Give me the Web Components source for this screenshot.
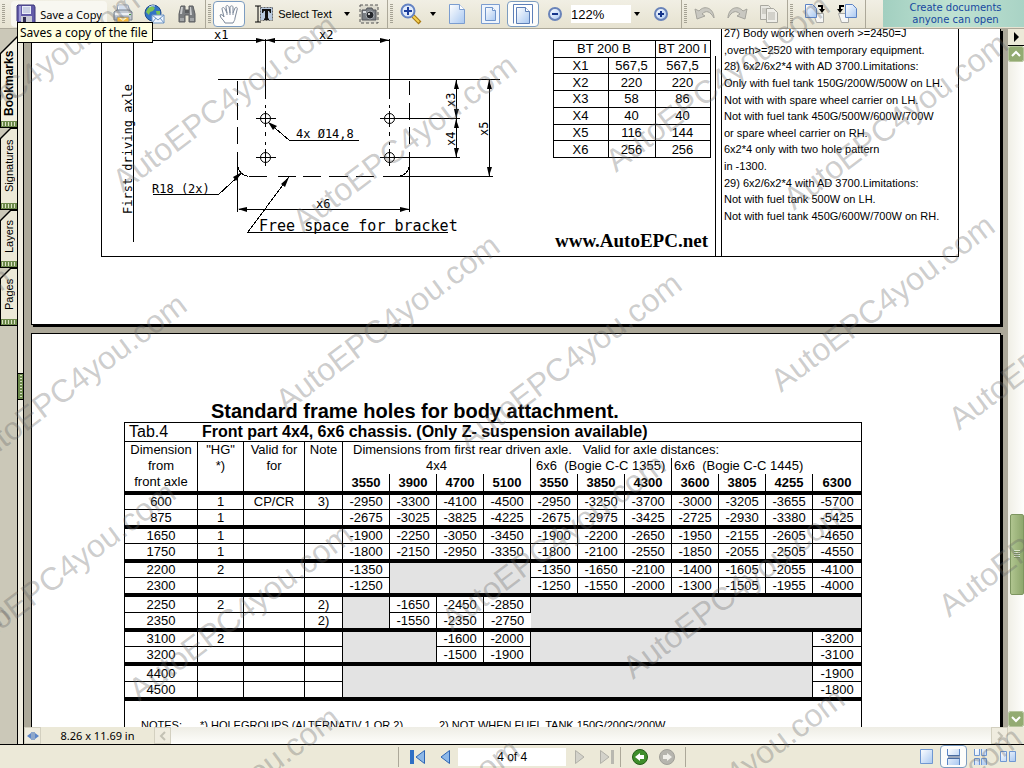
<!DOCTYPE html>
<html lang="en">
<head>
<meta charset="utf-8">
<title>Document viewer</title>
<style>
  body {
    margin: 0;
    font-family: "Liberation Sans", Arial, sans-serif;
    font-size: 11px;
    color: #000;
  }
</style>
</head>
<body>
<viewer-app></viewer-app>

<script>
// Small helper, every component fills its open shadow root the same way
function fill(host, css, html) {
  const shadow = host.attachShadow({ mode: 'open' });
  shadow.innerHTML = `<style>*{box-sizing:border-box}${css}</style>${html}`;
  return shadow;
}

// All of the icons, each one is [width, height, svg content]
const ICONS = {
  save: [20, 20, `<path d="M2 1h16l1 2v16H3l-2-2V2z" fill="#625ba8" stroke="#3c3778"/><path d="M3 2h2v15H3z" fill="#9c98d6"/><path d="M6 2h9v8H6z" fill="#e9edf8"/><path d="M7 4h7M7 6h7M7 8h7" stroke="#aab3cf"/><path d="M5 12h11v7H5z" fill="#c9cbd6"/><path d="M7 13h3v5H7z" fill="#2f2c52"/>`],
  print: [22, 20, `<path d="M6 1h10l2 7H5z" fill="#fff" stroke="#9aa6b8"/><path d="M7 3h8M7 5h9" stroke="#a8bfe0"/><path d="M2 8l3-2h12l3 2v8H2z" fill="#c3c9d1" stroke="#7b838f"/><path d="M3 9h16v2H3z" fill="#eef0f3"/><path d="M5 13h12v5H5z" fill="#f6b637" stroke="#8b93a0"/><path d="M7 14l4 3 4-3z" fill="#fff3c2"/><path d="M17 10h2v1h-2z" fill="#3b9b3b"/>`],
  mail: [22, 20, `<circle cx="9" cy="9" r="8" fill="#3273c6" stroke="#1d4b8d"/><path d="M4 4l4-2 3 2-2 3-3 1-1 3-3-3zM12 7l4 0v4l-3 1z" fill="#7cc355"/><path d="M5 3q3-2 6-1" stroke="#cfe6ff" fill="none"/><path d="M8 11h12v8H8z" fill="#eef5fd" stroke="#6d94c4"/><path d="M8 11l6 5 6-5M8 19l4-5M20 19l-4-5" fill="none" stroke="#6d94c4"/>`],
  find: [20, 20, `<path d="M4 2h4v4h4V2h4l2 8v8h-6v-7H8v7H2v-8z" fill="#7a7d80" stroke="#5c5e60"/><path d="M4 3h2l-1 7H3zM13 3h1l1 8h-2z" fill="#c9cbcc"/><path d="M3 14h4v3H3zM13 14h4v3h-4z" fill="#a3a6a8"/><path d="M8 6h4v3H8z" fill="#5b5d5f"/>`],
  hand: [22, 20, `<path d="M7 19c-1-3-5-5-5-8 1-1 3 0 4 2L4 5c0-2 2-2 3 0l2 4-1-6c0-2 2-2 3 0l1 6V3c1-2 3-1 3 0v6l2-5c1-1 3-1 2 2l-2 8c0 2-1 3-2 5z" fill="#fff" stroke="#7b8798"/><path d="M9 9v2M12 9v2M15 9v2" stroke="#7b8798"/>`],
  text: [20, 20, `<path d="M1 2h6M1 18h6M4 2v16" stroke="#000" fill="none"/><path d="M6 3h13v13H6z" fill="#b7c9df"/><path d="M6.500 3.500h12v13h-12z" fill="none" stroke="#666" stroke-dasharray="2 1"/><path d="M8 5h9v4h-1l-1-2h-1v7l1 1v1h-5v-1l1-1V7h-1L9 9H8z" fill="#111"/>`],
  camera: [20, 20, `<rect x="1" y="1" width="18" height="18" fill="#dcdace" stroke="#555" stroke-dasharray="3 2"/><path d="M3 6h4l1-2h5l1 2h3v10H3z" fill="#7a7f84" stroke="#54575b"/><path d="M4 7h3v2H4z" fill="#d9dcdf"/><circle cx="11" cy="11" r="4" fill="#24272b" stroke="#a3a8ad"/><circle cx="10" cy="10" r="1" fill="#fff"/>`],
  zoom: [22, 22, `<path d="M13 13l7 7" stroke="#a87a14" stroke-width="4"/><path d="M13 13l6 6" stroke="#f5d052" stroke-width="2"/><circle cx="8" cy="8" r="6.500" fill="#e1ebfb" stroke="#6483c3" stroke-width="2"/><path d="M8 4v8M4 8h8" stroke="#1d3f9c" stroke-width="2"/>`],
  page: [18, 20, `<path d="M1.500.500h10l5 5v14h-15z" fill="url(#pg)" stroke="#7b9dd0"/><path d="M11.500.500v5h5" fill="#fff" stroke="#7b9dd0"/>`],
  fit: [20, 20, `<path d="M.500.500h18v19H.500z" fill="#eef4fc" stroke="#7b9dd0"/><path d="M4.500 3.500h7l3 3v10h-10z" fill="url(#pg)" stroke="#6f94cb"/><path d="M11.500 3.500v3h3" fill="#fff" stroke="#6f94cb"/>`],
  width: [20, 20, `<path d="M.500 19.500V.500h19v19" fill="#fff" stroke="#5d7fb8"/><path d="M3.500 19.500v-16h9l4 4v12z" fill="url(#pg)" stroke="#5d7fb8"/><path d="M12.500 3.500v4h4" fill="#fff" stroke="#5d7fb8"/>`],
  minus: [16, 16, `<circle cx="8" cy="8" r="6" fill="url(#pg)" stroke="#6983b9" stroke-width="2"/><path d="M5 8h6" stroke="#14348a" stroke-width="2"/>`],
  plus: [16, 16, `<circle cx="8" cy="8" r="6" fill="url(#pg)" stroke="#6983b9" stroke-width="2"/><path d="M5 8h6M8 5v6" stroke="#14348a" stroke-width="2"/>`],
  undo: [22, 20, `<path d="M1 5l2 10 8-3-3-2c4-4 8-3 12 4 0-9-9-14-15-7z" fill="#c9c8c1" stroke="#a5a49c"/>`],
  redo: [22, 20, `<path d="M21 5l-2 10-8-3 3-2C10 6 6 7 2 14 2 5 11 0 17 7z" fill="#c9c8c1" stroke="#a5a49c"/>`],
  copy: [20, 20, `<path d="M1.500 1.500h8l2 2v12h-10z" fill="#e9e8e2" stroke="#a9a8a0"/><path d="M3 5h6M3 7h6M3 9h4" stroke="#b5b4ac"/><path d="M7.500 4.500h7l4 4v10h-11z" fill="#efeee8" stroke="#a9a8a0"/><path d="M9 9h7M9 11h7M9 13h7M9 15h7" stroke="#b5b4ac"/>`],
  turnright: [22, 20, `<path d="M9.500 9.500h10v9h-7z" fill="#f6f6f4" stroke="#a8a8a5"/><path d="M1.500.500h7l4 4v9h-11z" fill="url(#pg)" stroke="#5c83c4"/><path d="M14 2h4v3" fill="none" stroke="#000" stroke-width="2"/><path d="M15 5h6l-3 4z"/>`],
  turnleft: [22, 20, `<path d="M2.500 9.500h10v9h-7z" fill="#f6f6f4" stroke="#a8a8a5"/><path d="M9.500.500h7l4 4v9h-11z" fill="url(#pg)" stroke="#5c83c4"/><path d="M8 2H4v3" fill="none" stroke="#000" stroke-width="2"/><path d="M1 5h6L4 9z"/>`],
  drop: [6, 4, `<path d="M0 0h6L3 4z"/>`],
  first: [18, 16, `<path d="M1 1h4v14H1z" fill="#2f6fc4"/><path d="M15.500 1.500v13L7 8z" fill="#8db8e8" stroke="#2c64b4"/>`],
  prev: [12, 16, `<path d="M10.500 1.500v13L2 8z" fill="#8db8e8" stroke="#2c64b4"/>`],
  next: [12, 16, `<path d="M1.500 1.500v13L10 8z" fill="#d3d2ca" stroke="#b1b0a8"/>`],
  last: [18, 16, `<path d="M2.500 1.500v13L11 8z" fill="#d3d2ca" stroke="#b1b0a8"/><path d="M13 1h3v14h-3z" fill="#b9b8b0"/>`],
  back: [16, 16, `<circle cx="8" cy="8" r="7.500" fill="#3f8e2b" stroke="#235b17"/><path d="M3 8l5-4v2h4v4H8v2z" fill="#fff"/>`],
  forward: [16, 16, `<circle cx="8" cy="8" r="7.500" fill="#b6b5ae" stroke="#a09f98"/><path d="M13 8L8 4v2H4v4h4v2z" fill="#f1f0ea"/>`],
  single: [14, 16, `<path d="M.500.500h12v14H.500z" fill="url(#pg)" stroke="#6f97d2"/>`],
  continuous: [14, 16, `<path d="M.500 0v6.500h12V0M.500 16V9.500h12V16" fill="url(#pg)" stroke="#5b86c6"/><path d="M1 7h12M1 9h12" stroke="#36507d"/>`],
  facing: [14, 16, `<path d="M.500 0v6.500h5V0M7.500 0v6.500h5V0M.500 16V9.500h5V16M7.500 16V9.500h5V16" fill="url(#pg)" stroke="#6f97d2"/>`],
  double: [16, 16, `<path d="M.500 2.500h6v10h-6zM9.500 2.500h6v10h-6z" fill="url(#pg)" stroke="#6f97d2"/>`],
  split: [12, 10, `<path d="M5 1v8M7 1v8" stroke="#2f62b5"/><path d="M4 2v6L0 5zM8 2v6l4-3z" fill="#5d86c8"/>`],
  menu: [8, 10, `<path d="M2 0l5 5-5 5z"/>`],
  up: [10, 8, `<path d="M1 6l4-4 4 4" fill="none" stroke="#fff" stroke-width="2"/>`],
  down: [10, 8, `<path d="M1 2l4 4 4-4" fill="none" stroke="#fff" stroke-width="2"/>`],
  left: [8, 10, `<path d="M6 1L2 5l4 4" fill="none" stroke="#c3c1b4" stroke-width="2"/>`],
  right: [8, 10, `<path d="M2 1l4 4-4 4" fill="none" stroke="#c3c1b4" stroke-width="2"/>`]
};

class ViewIcon extends HTMLElement {
  constructor () {
    super();
    const [w, h, shape] = ICONS[this.getAttribute('name')];
    fill(this, `:host{display:inline-flex;flex:none} svg{display:block}`,
      `<svg width="${w}" height="${h}" viewBox="0 0 ${w} ${h}" aria-hidden="true">
        <linearGradient id="pg" x2="1" y2="1"><stop stop-color="#fff"/><stop offset="1" stop-color="#a9c8f1"/></linearGradient>
        ${shape}
      </svg>`);
  }
}

// Toolbar button: icon attribute, optional text in the slot
class ToolButton extends HTMLElement {
  constructor () {
    super();
    fill(this, `
      :host { display: flex; width: 32px; height: 26px; flex: none; }
      :host([size="small"]) { width: 12px; }
      :host([size="medium"]) { width: 27px; }
      :host([size="page"]) { width: 36px; }
      :host([size="wide"]) { width: 96px; }
      button {
        display: flex; align-items: center; justify-content: center; gap: 4px;
        width: 100%; height: 100%; padding: 0; margin: 0;
        border: 1px solid transparent; border-radius: 4px; background: none;
        font: inherit; color: inherit; white-space: nowrap;
      }
      :host([raised]) button { background: #f8f7f1; }
      :host([pressed]) button { background: #fdfdfb; border-color: #7c9cc0; }
    `, `<button aria-label="${this.getAttribute('label')}"><view-icon name="${this.getAttribute('icon')}"></view-icon><slot></slot></button>`);
  }
}

// A run of tools with the dotted grip in front and a line behind
class ToolGroup extends HTMLElement {
  constructor () {
    super();
    fill(this, `
      :host { display: flex; align-items: center; flex: none; height: 28px; border-right: 1px solid #aca899; padding-right: 2px; }
      i { width: 3px; height: 20px; margin: 0 2px; background: repeating-linear-gradient(#a5a294 0 1px, transparent 1px 2px); }
    `, `<i></i><slot></slot>`);
  }
}

class ViewToolbar extends HTMLElement {
  constructor () {
    super();
    fill(this, `
      :host { display: flex; align-items: center; height: 29px; flex: none; overflow: hidden; background: linear-gradient(#f1efe4, #e6e2d0); border-bottom: 1px solid #aca899; }
      .save { font-family: "Noto Sans", sans-serif; }
      .gap { width: 4px; }
      label { display: flex; }
      input { width: 60px; height: 18px; border: 0; padding: 0; background: #fff; font: 13px "Liberation Sans", Arial, sans-serif; }
      a {
        margin-left: auto; width: 141px; height: 27px; padding: 2px 0 0 4px; align-self: flex-start;
        background: linear-gradient(90deg, #a2cfc0, #bfe2d2 50%, #a9d3c5);
        color: #1648a0; text-align: center; text-decoration: none;
        font: 10px/12px "DejaVu Sans", sans-serif;
      }
    `, `
      <tool-group>
        <span class="gap"></span>
        <tool-button class="save" icon="save" label="Save a Copy" size="wide" raised>Save a Copy</tool-button>
        <tool-button icon="print" label="Print"></tool-button>
        <tool-button icon="mail" label="Email"></tool-button>
        <tool-button icon="find" label="Search"></tool-button>
      </tool-group>
      <tool-group>
        <tool-button icon="hand" label="Hand tool" pressed></tool-button>
        <tool-button icon="text" label="Select Text" size="wide">Select Text</tool-button>
        <tool-button icon="drop" label="Selection tools" size="small"></tool-button>
        <tool-button icon="camera" label="Snapshot"></tool-button>
      </tool-group>
      <tool-group>
        <tool-button icon="zoom" label="Zoom in"></tool-button>
        <tool-button icon="drop" label="Zoom tools" size="small"></tool-button>
        <tool-button icon="page" label="Actual size" size="page"></tool-button>
        <tool-button icon="fit" label="Fit page"></tool-button>
        <tool-button icon="width" label="Fit width" pressed></tool-button>
        <tool-button icon="minus" label="Zoom out"></tool-button>
        <label><input value="122%" aria-label="Zoom level"></label>
        <tool-button icon="drop" label="Zoom levels" size="small"></tool-button>
        <tool-button icon="plus" label="Zoom in more" size="page"></tool-button>
      </tool-group>
      <tool-group>
        <tool-button icon="undo" label="Undo"></tool-button>
        <tool-button icon="redo" label="Redo"></tool-button>
        <tool-button icon="copy" label="Copy"></tool-button>
      </tool-group>
      <tool-group>
        <span class="gap"></span>
        <tool-button icon="turnright" label="Rotate clockwise"></tool-button>
        <tool-button icon="turnleft" label="Rotate counterclockwise"></tool-button>
      </tool-group>
      <a href="#">Create documents<br>anyone can open</a>
    `);
  }
}

// Vertical tab of the navigation pane
class NavTab extends HTMLElement {
  constructor () {
    super();
    fill(this, `
      :host { display: block; width: 18px; height: 58px; background: #000; padding: 1px; flex: none; --cut: polygon(0 10px, 10px 0, 100% 0, 100% 100%, 0 100%); clip-path: var(--cut); }
      :host([selected]) { height: 99px; font-weight: bold; --cut: polygon(0 24px, 18px 6px, 100% 6px, 100% 100%, 0 100%); }
      :host([tall]) { height: 82px; }
      button { display: flex; flex-direction: column; width: 100%; height: 100%; padding: 0; border: 0; background: #f3f0e2; clip-path: var(--cut); font: inherit; font-size: 11px; color: inherit; }
      :host([selected]) button { font-size: 12px; }
      :host(:not([selected])) button { background: #ece9d8; }
      span { flex: 1; width: 100%; display: flex; justify-content: center; align-items: center; writing-mode: vertical-rl; transform: rotate(180deg); }
      :host([selected]) span { padding-bottom: 16px; }
      i { height: 6px; width: 100%; background: radial-gradient(#d9e2c4 1px, transparent 1px) 0 0 / 3px 6px, #6d8a4c; }
    `, `<button><span><slot></slot></span><i></i></button>`);
  }
}

class NavPane extends HTMLElement {
  constructor () {
    super();
    fill(this, `
      :host { display: flex; flex: none; width: 24px; background: #cbc8b8; }
      nav { width: 18px; border-right: 1px solid #000; }
      nav > * { width: 18px; }
      div { flex: 1; display: flex; flex-direction: column; justify-content: center; background: #efecdf; border-right: 1px solid #000; }
      i { height: 27px; border: solid #000; border-width: 1px 0; background: radial-gradient(#d9e2c4 1px, transparent 1px) 0 0 / 5px 3px, #6d8a4c; }
    `, `
      <nav>
        <nav-tab selected>Bookmarks</nav-tab>
        <nav-tab tall>Signatures</nav-tab>
        <nav-tab>Layers</nav-tab>
        <nav-tab>Pages</nav-tab>
      </nav>
      <div><i></i></div>
    `);
  }
}

// One sheet of paper with its hard black shadow
class DocPage extends HTMLElement {
  constructor () {
    super();
    fill(this, `
      :host { display: block; flex: none; background: #fff; border: 1px solid #000; box-shadow: 2px 2px 0 #000; }
      :host([cut]) { border-top: 0; }
    `, `<slot></slot>`);
  }
}

class HoleDrawing extends HTMLElement {
  constructor () {
    super();
    const hole = (x, y) => `<circle cx="${x}" cy="${y}" r="5"/><path d="M${x - 10} ${y}h20M${x} ${y - 8}v16"/>`;
    fill(this, `
      :host { display: block; flex: none; width: 446px; }
      svg { display: block; }
      .l { fill: none; stroke: #000; shape-rendering: crispEdges; }
      circle { shape-rendering: auto; }
      text { font: 12px "DejaVu Sans Mono", monospace; }
      .wide { font-size: 15px; }
    `, `
      <svg width="446" height="227" viewBox="102 29 446 227">
        <g class="l" transform="translate(.5 .5)">
          <path d="M133 29v212M134 40h255M265 38v60M265 104v3M265 131v4M265 141v3M265 148v3M389 38v60M389 104v3M389 131v4M389 141v3M389 148v3"/>
          <path d="M217 79h282M237 80v14M237 102v17M237 126v17M237 151v60M409 80v14M409 102v17M409 126v17M409 151v60"/>
          <path d="M248 176h18M277 176h18M302 176h18M328 176h19M355 176h18M382 176h110"/>
          <path d="M237 165q2 10 11 11M409 165q-2 10-11 11M238 209h171"/>
          <path d="M399 118h60M399 157h60M456 79v78M489 79v97"/>
          <path d="M152 194h66l23-21M268 122l21 18h69M288 177l-41 55h200"/>
          ${hole(265, 118)}${hole(265, 157)}${hole(389, 118)}${hole(389, 157)}
        </g>
        <path d="M265 40l-9-2v5zM266 40l9-2v5zM389 40l-9-2v5zM238 209l9-2v5zM409 209l-9-2v5z
          M456 80l-2 9h5zM456 118l-2-9h5zM456 119l-2 9h5zM456 157l-2-9h5zM489 80l-2 9h5zM489 176l-2-9h5z
          M242 172l-9 5 3 4zM268 122l5 8 4-4zM289 177l-8 7 4 3z"/>
        <text x="214" y="39">x1</text>
        <text x="319" y="39">x2</text>
        <text x="316" y="208">x6</text>
        <text x="152" y="193">R18 (2x)</text>
        <text x="296" y="138">4x Ø14,8</text>
        <text class="wide" x="259" y="231">Free space for bracket</text>
        <text transform="translate(132 214) rotate(-90)">First driving axle</text>
        <text transform="translate(455 107) rotate(-90)">x3</text>
        <text transform="translate(455 146) rotate(-90)">x4</text>
        <text transform="translate(488 136) rotate(-90)">x5</text>
      </svg>
    `);
  }
}

class SizeTable extends HTMLElement {
  constructor () {
    super();
    const rows = [['X1', '567,5', '567,5'], ['X2', 220, 220], ['X3', 58, 86], ['X4', 40, 40], ['X5', 116, 144], ['X6', 256, 256]];
    fill(this, `
      :host { display: block; }
      table { width: 158px; height: 118px; table-layout: fixed; border-collapse: collapse; font-size: 13px; line-height: 15px; }
      th, td { border: 1px solid #000; padding: 0; text-align: center; font-weight: normal; white-space: nowrap; }
    `, `
      <table>
        <colgroup><col style="width:55px"><col style="width:47px"><col></colgroup>
        <tr><th colspan="2">BT 200 B</th><th>BT 200 I</th></tr>
        ${rows.map(r => `<tr>${r.map(c => `<td>${c}</td>`).join('')}</tr>`).join('')}
      </table>
    `);
  }
}

class NoteList extends HTMLElement {
  constructor () {
    super();
    const lines = [
      '27) Body work when overh &gt;=2450=J', ',overh&gt;=2520 with temporary equipment.',
      '28) 6x2/6x2*4 with AD 3700.Limitations:', 'Only with fuel tank 150G/200W/500W on LH.',
      'Not with with spare wheel carrier on LH.', 'Not with fuel tank 450G/500W/600W/700W',
      'or spare wheel carrier on RH.', '6x2*4 only with two hole pattern', 'in -1300.',
      '29) 6x2/6x2*4 with AD 3700.Limitations:', 'Not with fuel tank 500W on LH.',
      'Not with fuel tank 450G/600W/700W on RH.'
    ];
    fill(this, `
      :host { display: grid; grid-auto-rows: 1fr; align-items: center; height: 199px; line-height: 14px; white-space: nowrap; }
    `, lines.map(l => `<span>${l}</span>`).join(''));
  }
}

class FrameTable extends HTMLElement {
  constructor () {
    super();
    // A string such as "#3x2" is a grey area of 3 columns by 2 rows
    const rows = [
      '600 1 CP/CR 3) -2950 -3300 -4100 -4500 -2950 -3250 -3700 -3000 -3205 -3655 -5700',
      '875 1 _ _ -2675 -3025 -3825 -4225 -2675 -2975 -3425 -2725 -2930 -3380 -5425',
      '1650 1 _ _ -1900 -2250 -3050 -3450 -1900 -2200 -2650 -1950 -2155 -2605 -4650',
      '1750 1 _ _ -1800 -2150 -2950 -3350 -1800 -2100 -2550 -1850 -2055 -2505 -4550',
      '2200 2 _ _ -1350 #3x2 -1350 -1650 -2100 -1400 -1605 -2055 -4100',
      '2300 _ _ _ -1250 -1250 -1550 -2000 -1300 -1505 -1955 -4000',
      '2250 2 _ 2) #1x2 -1650 -2450 -2850 #7x2',
      '2350 _ _ 2) -1550 -2350 -2750',
      '3100 2 _ _ #2x2 -1600 -2000 #6x2 -3200',
      '3200 _ _ _ -1500 -1900 -3100',
      '4400 _ _ _ #10x2 -1900',
      '4500 _ _ _ -1800'
    ];
    const cell = c => {
      if (c[0] === '#') {
        const [cols, span] = c.slice(1).split('x');
        return `<td class="grey" colspan="${cols}" rowspan="${span}"></td>`;
      }
      return `<td>${c === '_' ? '' : c}</td>`;
    };
    const axles = [3550, 3900, 4700, 5100, 3550, 3850, 4300, 3600, 3805, 4255, 6300];
    fill(this, `
      :host { display: block; }
      table { width: 736px; table-layout: fixed; border-collapse: separate; border-spacing: 0; font-size: 13px; line-height: 14px; }
      th, td { padding: 0; font-weight: normal; text-align: center; border: 0 solid #000; white-space: nowrap; overflow: hidden; }
      .title th { height: 19px; border-bottom-width: 1px; text-align: left; padding-left: 4px; font-size: 16px; line-height: 18px; }
      .title th + th { font-weight: bold; }
      .head th { height: 16px; line-height: 16px; }
      .head .side { vertical-align: top; border-width: 0 1px 4px 0; }
      .head .left { text-align: left; padding-left: 10px; }
      .head .bogie { text-align: left; padding-left: 5px; border-left-width: 0; border-right-width: 1px; overflow: visible; }
      .head .bogie.second { padding-left: 2px; border-right: 0; }
      .head .four { border-right-width: 1px; }
      .axle th { height: 21px; font-weight: bold; border-width: 0 1px 4px 0; }
      .axle th:last-child { border-right: 0; }
      tbody td { height: 15px; border-width: 0 1px 1px 0; }
      tbody td:last-child { border-right-width: 0; }
      tbody tr:nth-child(even) td, tbody .grey { height: 19px; border-bottom-width: 4px; }
      tbody tr:nth-child(4n+7) td:not(.grey) { height: 16px; }
      tbody .grey { background: #e3e3e3; border-right-width: 1px; }
    `, `
      <table>
        <colgroup><col style="width:73px"><col style="width:46px"><col style="width:61px"><col style="width:38px">${'<col style="width:47px">'.repeat(10)}<col></colgroup>
        <thead>
          <tr class="title"><th>Tab.4</th><th colspan="14">Front part 4x4, 6x6 chassis. (Only Z- suspension available)</th></tr>
          <tr class="head">
            <th class="side" rowspan="3">Dimension<br>from<br>front axle</th>
            <th class="side" rowspan="3">"HG"<br>*)</th>
            <th class="side" rowspan="3">Valid for<br>for</th>
            <th class="side" rowspan="3">Note</th>
            <th class="left" colspan="11">Dimensions from first rear driven axle. &nbsp; Valid for axle distances:</th>
          </tr>
          <tr class="head">
            <th class="four" colspan="4">4x4</th>
            <th class="bogie" colspan="3">6x6 &nbsp;(Bogie C-C 1355)</th>
            <th class="bogie second" colspan="4">6x6 &nbsp;(Bogie C-C 1445)</th>
          </tr>
          <tr class="axle">${axles.map(a => `<th>${a}</th>`).join('')}</tr>
        </thead>
        <tbody>${rows.map(r => `<tr>${r.split(' ').map(cell).join('')}</tr>`).join('')}</tbody>
      </table>
    `);
  }
}

class DocView extends HTMLElement {
  constructor () {
    super();
    fill(this, `
      :host { display: flex; flex-direction: column; gap: 8px; flex: 1; min-width: 0; overflow: hidden; padding: 0 7px; background: #aca899; }
      .first { padding-bottom: 67px; }
      .frame { display: flex; height: 228px; margin: 0 41px 0 69px; border: solid #000; border-width: 0 1px 1px; }
      .middle { display: flex; flex-direction: column; justify-content: space-between; align-items: center; flex: none; width: 167px; padding: 11px 0 4px; }
      .middle b { font: bold 19px/22px "Liberation Serif", serif; }
      .rule { width: 1px; margin: 27px 5px 0 0; background: #000; }
      .notes { flex: 1; min-width: 0; padding: 0 0 0 2px; border-left: 1px solid #000; }
      note-list { margin-top: -4px; }
      .second { height: 1200px; }
      h1 { margin: 66px 0 0 179px; font-size: 20px; line-height: 22px; white-space: nowrap; }
      .tab { width: 738px; height: 1000px; margin-left: 92px; border: 1px solid #000; }
      .foot { display: grid; grid-template-columns: 59px 239px 1fr; padding: 17px 16px; line-height: 14px; white-space: nowrap; }
    `, `
      <doc-page class="first" cut>
        <div class="frame">
          <hole-drawing></hole-drawing>
          <div class="middle"><size-table></size-table><b>www.AutoEPC.net</b></div>
          <div class="rule"></div>
          <div class="notes"><note-list></note-list></div>
        </div>
      </doc-page>
      <doc-page class="second">
        <h1>Standard frame holes for body attachment.</h1>
        <div class="tab">
          <frame-table></frame-table>
          <div class="foot"><span>NOTES:</span><span>*) HOLEGROUPS (ALTERNATIV 1 OR 2)</span><span>2) NOT WHEN FUEL TANK 150G/200G/200W</span></div>
        </div>
      </doc-page>
    `);
  }
}

class SideScroll extends HTMLElement {
  constructor () {
    super();
    fill(this, `
      :host { display: flex; flex-direction: column; flex: none; width: 16px; background: linear-gradient(90deg, #f0efe6, #fefefc); }
      button { display: flex; align-items: center; justify-content: center; width: 100%; height: 16px; padding: 0; border: 1px solid #fff; border-radius: 2px; background: #93ab72; outline: 1px solid #b5c49c; outline-offset: -1px; }
      .menu { height: 17px; border: 0; border-bottom: 1px solid #000; border-radius: 0; background: #ece9d8; outline: 0; }
      .track { flex: 1; display: flex; flex-direction: column; }
      .before { flex: 453; }
      .after { flex: 116; }
      .thumb { flex: 80; margin: 0 0 0 2px; display: flex; align-items: center; justify-content: center; border: 1px solid #7d9560; border-radius: 2px; background: linear-gradient(90deg, #b0c58f, #8ea76d); }
      .thumb i { width: 6px; height: 8px; background: repeating-linear-gradient(#dfe8cd 0 1px, #809a60 1px 2px); }
    `, `
      <button class="menu" aria-label="Options"><view-icon name="menu"></view-icon></button>
      <button aria-label="Scroll up"><view-icon name="up"></view-icon></button>
      <div class="track"><span class="before"></span><div class="thumb"><i></i></div><span class="after"></span></div>
      <button aria-label="Scroll down"><view-icon name="down"></view-icon></button>
    `);
  }
}

class SizeBar extends HTMLElement {
  constructor () {
    super();
    fill(this, `
      :host { display: flex; flex: none; height: 17px; background: #ece9d8; font: 11px/17px "Noto Sans", sans-serif; }
      button { display: flex; align-items: center; justify-content: center; flex: none; width: 17px; padding: 0; background: #efecdf; border: 1px solid #d3d0c0; }
      span { flex: none; width: 113px; text-align: center; }
      div { flex: 1; background: linear-gradient(#eeede5, #fefefb); }
      i { width: 16px; background: #ece9d8; }
    `, `
      <button aria-label="Split"><view-icon name="split"></view-icon></button>
      <span>8.26 x 11.69 in</span>
      <button aria-label="Scroll left" disabled><view-icon name="left"></view-icon></button>
      <div></div>
      <button aria-label="Scroll right" disabled><view-icon name="right"></view-icon></button>
      <i></i>
    `);
  }
}

class StatusBar extends HTMLElement {
  constructor () {
    super();
    fill(this, `
      :host { display: flex; align-items: center; justify-content: space-between; height: 24px; flex: none; padding-right: 3px; background: #ece9d8; border-top: 1px solid #000; }
      div { display: flex; align-items: center; }
      .pages { margin-left: 39%; border: solid #aca899; border-width: 0 1px; height: 20px; padding: 0 5px; }
      input { width: 108px; height: 18px; padding: 0; border: 0; background: #fff; text-align: center; font: 12px "Liberation Sans", Arial, sans-serif; }
      hr { width: 1px; height: 20px; margin: 0 5px 0 0; border: 0; background: #aca899; }
      tool-button { height: 23px; }
    `, `
      <div class="pages">
        <tool-button icon="first" label="First page" size="medium"></tool-button>
        <tool-button icon="prev" label="Previous page" size="medium"></tool-button>
        <input value="4 of 4" aria-label="Page">
        <tool-button icon="next" label="Next page" size="medium"></tool-button>
        <tool-button icon="last" label="Last page" size="medium"></tool-button>
        <hr>
        <tool-button icon="back" label="Previous view" size="medium"></tool-button>
        <tool-button icon="forward" label="Next view" size="medium"></tool-button>
      </div>
      <div>
        <tool-button icon="single" label="Single page" size="medium"></tool-button>
        <tool-button icon="continuous" label="Continuous" size="medium" pressed></tool-button>
        <tool-button icon="facing" label="Continuous facing" size="medium"></tool-button>
        <tool-button icon="double" label="Facing" size="medium"></tool-button>
      </div>
    `);
  }
}

// Slanted marks repeated over the whole window
class WaterMarks extends HTMLElement {
  constructor () {
    super();
    const starts = [
      [-74, 168], [123, 193], [303, 233], [616, 173], [794, 211], [-197, 258], [-202, 445],
      [-27, 472], [286, 413], [468, 451], [781, 393], [959, 431], [-38, 660], [139, 702],
      [452, 632], [633, 680], [949, 618], [-204, 780], [126, 885], [306, 917], [631, 866], [808, 905]
    ];
    fill(this, `
      :host { position: absolute; inset: 0; overflow: hidden; pointer-events: none; }
      svg { display: block; width: 100%; height: 100%; }
      text { font: 32px "Liberation Sans", Arial, sans-serif; fill: rgb(100 100 100 / 32%); }
    `, `<svg>${starts.map(([x, y]) => `<text transform="translate(${x} ${y}) rotate(-37)">AutoEPC4you.com</text>`).join('')}</svg>`);
  }
}

class ViewerApp extends HTMLElement {
  constructor () {
    super();
    fill(this, `
      :host { display: flex; flex-direction: column; position: relative; height: 100vh; overflow: hidden; }
      .main { display: flex; flex: 1; min-height: 0; }
      .content { display: flex; flex-direction: column; flex: 1; min-width: 0; }
      .view { display: flex; flex: 1; min-height: 0; }
      .tip { position: absolute; left: 17px; top: 22px; padding: 0 4px 0 2px; border: 1px solid #000; background: #ffffe1; font: 12px/19px "Noto Sans", sans-serif; white-space: nowrap; }
    `, `
      <view-toolbar></view-toolbar>
      <div class="main">
        <nav-pane></nav-pane>
        <div class="content">
          <div class="view"><doc-view></doc-view><side-scroll></side-scroll></div>
          <size-bar></size-bar>
        </div>
      </div>
      <status-bar></status-bar>
      <water-marks></water-marks>
      <div class="tip" role="tooltip">Saves a copy of the file</div>
    `);
  }
}

customElements.define('view-icon', ViewIcon);
customElements.define('tool-button', ToolButton);
customElements.define('tool-group', ToolGroup);
customElements.define('view-toolbar', ViewToolbar);
customElements.define('nav-tab', NavTab);
customElements.define('nav-pane', NavPane);
customElements.define('doc-page', DocPage);
customElements.define('hole-drawing', HoleDrawing);
customElements.define('size-table', SizeTable);
customElements.define('note-list', NoteList);
customElements.define('frame-table', FrameTable);
customElements.define('doc-view', DocView);
customElements.define('side-scroll', SideScroll);
customElements.define('size-bar', SizeBar);
customElements.define('status-bar', StatusBar);
customElements.define('water-marks', WaterMarks);
customElements.define('viewer-app', ViewerApp);
</script>
</body>
</html>
